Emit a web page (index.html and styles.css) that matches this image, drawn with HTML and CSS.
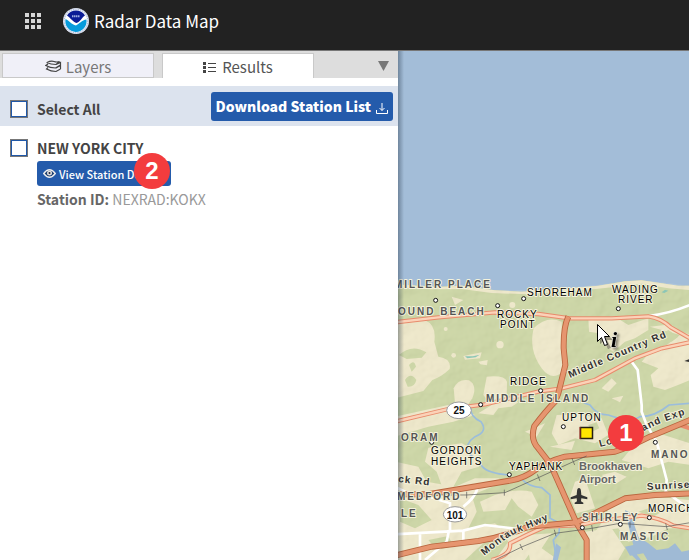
FILE: index.html
```html
<!DOCTYPE html>
<html lang="en">
<head>
<meta charset="utf-8">
<meta name="viewport" content="width=device-width, initial-scale=1">
<title>Radar Data Map</title>
<link rel="stylesheet" href="styles.css">
</head>
<body>
<header class="topbar">
  <button class="apps" type="button" aria-label="Applications">
    <svg width="16" height="16" viewBox="0 0 16 16" fill="#d6d6d6" shape-rendering="crispEdges"><path d="M0 0h4v4H0zM6 0h4v4H6zM12 0h4v4h-4zM0 6h4v4H0zM6 6h4v4H6zM12 6h4v4h-4zM0 12h4v4H0zM6 12h4v4H6zM12 12h4v4h-4z"/></svg>
  </button>
  <svg class="logo" width="26" height="26" viewBox="0 0 26 26" aria-hidden="true">
    <circle cx="13" cy="13" r="13" fill="#e6ebf5"/>
    <circle cx="13" cy="13" r="11.9" fill="none" stroke="#8fa0cf" stroke-width="1" stroke-dasharray="1 1.3"/>
    <circle cx="13" cy="13" r="10.8" fill="#fff"/>
    <path d="M4 7.500A10.600 10.600 0 0 1 22 7.500C19 9 17 14.500 13.500 15C10 14 7.500 10 4 7.500z" fill="#0b1c96"/>
    <path d="M2.600 11C6 12.500 8.500 16.500 13 17.500C16 16 19 12 23.400 11.500A10.600 10.600 0 1 1 2.600 11z" fill="#069bdc"/>
    <path d="M9 8.300h8" stroke="#9dabe0" stroke-width="2" stroke-dasharray="1.500 .500"/>
  </svg>
  <h1>Radar Data Map</h1>
</header>
<main class="workspace">
  <section class="panel">
    <nav class="tabs">
      <button class="tab" type="button">
        <svg width="17" height="13" viewBox="0 0 17 13" fill="none" stroke="#444" stroke-width="1.200"><path d="M2 2.500Q6 .5 9 1.500T14.500 1.500L11 4.500Q6 4.500 1.500 2.500M3 4L.8 5.500Q5 8 10.500 8L15.500 5M3 7.500L1.500 9Q6 11.500 11 11.500L15.500 9M11 4.500L15.500 2.500V5.500L11 8M15.500 5.500V9"/></svg>
        Layers
      </button>
      <button class="tab active" type="button">
        <svg width="13" height="11" viewBox="0 0 13 11" fill="#444" shape-rendering="crispEdges"><path d="M0 0h3v3H0zM0 4h3v3H0zM0 8h3v3H0zM5 1h8v1H5zM5 5h8v1H5zM5 9h8v1H5z"/></svg>
        Results
      </button>
      <button class="collapse" type="button" aria-label="Collapse panel"><svg width="12" height="10" viewBox="0 0 12 10"><path d="M0 0h11L5.500 10z" fill="#777"/></svg></button>
    </nav>
    <div class="select-bar">
      <input id="all" class="check" type="checkbox">
      <label for="all">Select All</label>
      <button class="btn download" type="button">Download Station List
        <svg width="12" height="11" viewBox="0 0 12 11" fill="none" stroke="#fff"><path d="M.5 7v3.500h11V7M6 0v7.500M3.500 5L6 7.500 8.500 5"/></svg>
      </button>
    </div>
    <article class="station">
      <input id="nyc" class="check" type="checkbox">
      <div class="details">
        <label for="nyc">NEW YORK CITY</label>
        <div class="action">
          <button class="btn view" type="button"><svg width="13" height="9" viewBox="0 0 13 9"><path d="M.7 4.500Q6.500-3 12.300 4.500Q6.500 12 .7 4.500z" fill="#1c3f70" stroke="#eee" stroke-width="1.300"/><circle cx="6.500" cy="4" r="2.500" fill="#ddd"/><circle cx="6.500" cy="4" r="1" fill="#223"/></svg>View Station Details</button>
          <span class="badge">2</span>
        </div>
        <p><b>Station ID:</b> NEXRAD:KOKX</p>
      </div>
    </article>
  </section>
  <section class="map" aria-label="Station map">
    <svg class="canvas" viewBox="398 51 291 509" preserveAspectRatio="xMinYMin slice">
      <defs>
        <linearGradient id="edge"><stop offset="0" stop-color="#234" stop-opacity=".4"/><stop offset="1" stop-color="#234" stop-opacity="0"/></linearGradient>
        <path id="montauk" d="M484 556Q510 534 522 531Q534 526 560 515"/>
        <path id="expressway" d="M600 447Q628 440 644 431Q662 421 700 410"/>
        <filter id="relief" x="0" y="0" width="100%" height="100%"><feTurbulence type="fractalNoise" baseFrequency=".018" numOctaves="3" seed="6" result="n"/><feDiffuseLighting in="n" surfaceScale="9" lighting-color="#fff" result="l"><feDistantLight azimuth="225" elevation="60"/></feDiffuseLighting><feComposite in="l" in2="SourceAlpha" operator="in"/></filter>
      </defs>
      <rect x="398" y="51" width="291" height="509" fill="#a3bdd8"/>
      <g transform="translate(395 265) scale(.33333)">
        <path d="M0 58L120 66L200 62L300 76L380 80L450 76L540 68L610 62L690 49L740 46L800 55L850 62H890V890H0z" fill="#c7d29b"/>
        <g fill="#ede6c4">
          <path d="M0 58L120 66L200 62L300 76L380 80L450 76L540 68L610 62L690 49L740 46L800 55L850 62H890V76L820 70L740 56L680 64L580 74L400 88L290 84L200 72L110 73L0 68z"/>
          <path d="M0 172L90 166Q125 180 118 230L130 275Q170 280 164 312Q140 335 112 345L85 378L0 400z"/>
          <path d="M416 190Q455 150 500 170L503 320Q470 350 440 310Q400 255 416 190z"/>
          <path d="M580 160L660 155L700 180L760 160L760 195L720 220L690 230L655 260L620 235L612 205L582 200z"/>
          <path d="M765 185L810 180L885 210V345Q850 360 810 375L775 365L767 330L790 310L740 290L770 255L815 240L855 210z"/>
          <path d="M176 370Q190 340 222 346Q248 362 232 400L208 435L180 415z"/>
          <path d="M275 335Q330 330 336 350L335 400L370 412L350 425L310 430L295 450L250 445L290 420L265 390z"/>
          <path d="M0 455L160 420L240 450L175 470L100 485L0 515z"/>
          <path d="M100 548L200 535L250 560L252 605L200 620L175 665L145 675L125 620L90 590z"/>
          <path d="M0 590L70 605L95 650L180 665L240 640L310 640L330 650L230 690L245 740L220 790L300 775L330 800L270 830L210 885H0z"/>
          <path d="M300 690Q360 670 410 680L430 720L410 755L370 725L350 700L330 735L265 740L255 710z"/>
          <path d="M485 450L550 448L620 460L640 510L600 535L540 520L490 540L470 505z"/>
          <path d="M540 650L570 640L585 685L600 730L545 745L525 695z"/>
          <path d="M735 520L790 505L885 535V600L820 590L760 610L680 585z"/>
          <path d="M640 730L700 700L780 695L885 705V790L820 790L770 815L700 830L670 790L600 800L630 760z"/>
          <path d="M310 790L385 790L430 830L390 885H300L340 830z"/>
          <path d="M390 810L470 805L440 850L490 885H405z"/>
          <path d="M570 800L650 790L690 850L670 885H580z"/>
          <circle cx="352" cy="120" r="9"/><circle cx="315" cy="239" r="11"/><circle cx="152" cy="192" r="6"/><circle cx="176" cy="271" r="7"/>
          <path d="M205 273L260 262L255 280L210 284zM250 290l28-5-2 16-20-3zM620 370l30-30 15 15-25 25zM650 400l35-8-10 20zM170 95l35 10-25 15zM390 500l60-25-25 40zM465 545l75-18-10 28zM620 630l40-10 35 15-30 20z"/>
        </g>
        <g fill="#c7d29b"><path d="M12 270Q50 235 94 262L80 278L35 282zM42 300q15-18 21 5l-13 15zM30 345q17-25 34 0-5 22-26 20zM15 700l55 20 40 45-50 25-45-20zM100 825l60-12 15 30-50 12zM795 210l25-15 30 20-20 15zM580 480l25-8 8 18-25 12zM730 740l45-15 30 12-30 18z"/></g>
        <path d="M0 58L120 66L300 76L450 76L740 46L890 62V890H0z" fill="#fff" filter="url(#relief)" opacity=".15"/>
        <path d="M690 735Q720 745 718 780L730 815L760 835L785 855L820 850L840 835L860 860L885 855V890H760L745 865L705 872L690 845L715 840L700 780zM725 885l-18-18 15-3 16 21zM483 835l15 12-10 40h-15z" fill="#9fbad5"/>
        <g class="stream">
          <path d="M228 430Q225 455 258 470Q280 500 240 515Q210 535 218 565L250 585L262 605Q280 625 340 630"/>
          <path d="M380 642Q400 665 440 668L465 690V760L494 775L492 805L475 825L485 885"/>
          <path d="M535 385Q550 410 585 420Q605 450 640 450Q710 475 735 455Q780 455 822 420L885 415"/>
        </g>
        <path d="M210 274h24l20-5-12 8-25 3zM585 70l10 5-8 3zM800 82l10-8 10 3-12 7z" fill="#8cc6b6"/>
        <g class="street">
          <path d="M710 290L728 315L740 420V440L755 480L785 530L815 645L812 680L880 730M762 153Q825 145 885 120"/>
          <path d="M0 808L205 797L270 780L370 792M75 805V885M205 797V825M162 795L155 830L90 885M165 795V715L80 688M247 672Q238 700 205 725M0 665L50 690L90 694"/>
        </g>
        <g class="roads minor casing"><path d="M0 172L130 157L300 142L430 147L525 160L650 160L760 154Q800 160 827 187L885 220"/><path d="M0 470L160 432L270 418L430 380L500 370L600 345L720 280L800 250L885 232"/><path d="M290 885Q350 870 345 835L395 810L450 785L555 780L600 770L740 752Q800 760 835 782L885 790"/><path d="M850 478L885 490"/></g>
        <g class="roads minor fill"><path d="M0 172L130 157L300 142L430 147L525 160L650 160L760 154Q800 160 827 187L885 220"/><path d="M0 470L160 432L270 418L430 380L500 370L600 345L720 280L800 250L885 232"/><path d="M290 885Q350 870 345 835L395 810L450 785L555 780L600 770L740 752Q800 760 835 782L885 790"/></g>
        <g class="roads major casing"><path d="M0 688L100 688L350 646Q390 638 420 615Q455 590 510 575L660 560Q700 548 765 515L885 465"/><path d="M520 155Q505 185 506 250L511 300L490 385L480 410Q455 435 418 483Q405 525 430 550L465 595L485 640L545 775L575 825V885"/><path d="M0 872L110 845L250 828Q330 815 400 785L545 772L690 700L780 690L885 685"/></g>
        <g class="roads major fill"><path d="M0 688L100 688L350 646Q390 638 420 615Q455 590 510 575L660 560Q700 548 765 515L885 465"/><path d="M520 155Q505 185 506 250L511 300L490 385L480 410Q455 435 418 483Q405 525 430 550L465 595L485 640L545 775L575 825V885"/><path d="M0 872L110 845L250 828Q330 815 400 785L545 772L690 700L780 690L885 685"/></g>
        <path class="rail" d="M90 690H215L330 683L430 638L535 590L575 573M300 885L380 846L480 805L590 790L675 775L815 785L885 773M105 680v20M215 680v20M328 674v18M427 628l8 20M531 580l8 20M375 837l8 18M478 794l5 20M590 780l3 20M705 770v18M812 775l5 20"/>
        <path d="M552 669q5 0 6 10l1 11 18 7v6l-18-3-1 9 7 4v4h-26v-4l7-4-1-9-18 3v-6l18-7 1-11q1-10 6-10zM868 288l20-8v12z" fill="#333"/>
        <g fill="#fff" stroke="#111" stroke-width="3"><circle cx="122" cy="106" r="6"/><circle cx="308" cy="122" r="6"/><circle cx="386" cy="101" r="6"/><circle cx="670" cy="131" r="6"/><circle cx="437" cy="377" r="6"/><circle cx="257" cy="419" r="6"/><circle cx="505" cy="485" r="6"/><circle cx="110" cy="532" r="6"/><circle cx="343" cy="629" r="6"/><circle cx="781" cy="532" r="6"/><circle cx="763" cy="758" r="6"/><circle cx="562" cy="788" r="6"/><circle cx="676" cy="778" r="6"/></g>
        <g fill="#fff" stroke="#999" stroke-width="3"><ellipse cx="192" cy="436" rx="37" ry="25"/><ellipse cx="180" cy="748" rx="35" ry="23"/></g>
      </g>
      <g class="place town">
        <text x="527" y="296">SHOREHAM</text><text x="612" y="293">WADING</text><text x="618" y="303">RIVER</text>
        <text x="497" y="318">ROCKY</text><text x="500" y="328">POINT</text><text x="510" y="385">RIDGE</text><text x="562" y="421">UPTON</text>
        <text x="431" y="454">GORDON</text><text x="431" y="465">HEIGHTS</text><text x="509" y="470">YAPHANK</text><text x="648" y="512">MORICH</text>
      </g>
      <g class="place area">
        <text x="394" y="288">MILLER PLACE</text><text x="398" y="315">OUND BEACH</text><text x="486" y="402">MIDDLE ISLAND</text>
        <text x="401" y="441">ORAM</text><text x="397" y="500">MEDFORD</text><text x="401" y="517">LE</text><text x="651" y="458">MANO</text><text x="582" y="521">SHIRLEY</text><text x="620" y="540">MASTIC</text>
      </g>
      <g class="place airport"><text x="579" y="470">Brookhaven</text><text x="579" y="483">Airport</text></g>
      <g class="place road">
        <text transform="translate(570 378) rotate(-23)">Middle Country Rd</text><text><textPath href="#expressway">Long Island Exp</textPath></text>
        <text transform="translate(398 482) rotate(6)">ck Rd</text><text transform="translate(647 490) rotate(-3)">Sunrise</text><text><textPath href="#montauk">Montauk Hwy</textPath></text>
      </g>
      <g class="shield"><text x="459" y="414">25</text><text x="455" y="519">101</text></g>
      <path d="M580.500 427.500h12v11h-12z" fill="#ffe500" stroke="#251f10" stroke-width="1.500"/><path d="M580 427v12" stroke="#a52a22"/>
      <g opacity=".35" transform="translate(3 3)"><path d="M597 324v17l4-3 4 8 3-1-4-8h6z"/></g>
      <path d="M597.500 324.500v17l4-4 3 8 3-1-3-8h5z" fill="#fff" stroke="#000"/>
      <text class="info" x="611" y="347">i</text>
      <g class="marker"><circle cx="626" cy="433" r="18"/><text x="626" y="441">1</text></g>
      <rect x="398" y="51" width="6" height="509" fill="url(#edge)"/>
    </svg>
  </section>
</main>
</body>
</html>
```
FILE: styles.css
```css
* { box-sizing: border-box; }
body {
  margin: 0;
  min-height: 100vh;
  display: flex;
  flex-direction: column;
  font-family: "Noto Sans CJK SC", "Noto Sans", sans-serif;
  font-size: 14px;
  line-height: 20px;
  color: #444;
  background: #fff;
}
button { font: inherit; border: 0; padding: 0; cursor: pointer; }
svg { display: block; flex: none; }

.topbar {
  display: flex;
  align-items: center;
  height: 51px;
  padding: 0 25px 8px;
  background: #222;
  border-bottom: 1px solid #777;
}
.apps { background: none; margin-right: 22px; }
.logo { margin-right: 5px; }
h1 { margin: 0; font-size: 17px; font-weight: 400; line-height: 24px; color: #fff; }

.workspace { flex: 1; display: grid; grid-template-columns: 26fr 19fr; }
.panel { min-width: 0; }
.tabs { display: flex; align-items: stretch; gap: 8px; height: 27px; padding: 2px 8px 0 2px; background: #ddd; }
.tab {
  display: flex;
  align-items: center;
  justify-content: center;
  gap: 4px;
  width: 152px;
  padding-top: 2px;
  font-size: 15px;
  color: #777;
  background: #f0f0f8;
  border: 1px solid #c9c9c9;
}
.tab.active { gap: 6px; color: #555; background: #fff; border-bottom: 0; }
.collapse { margin-left: auto; background: none; }

.select-bar {
  display: flex;
  align-items: center;
  gap: 9px;
  height: 40px;
  margin-top: 8px;
  padding: 0 5px 0 10px;
  background: #dce3ee;
}
label { font-weight: 700; line-height: 18px; }
.select-bar label { padding-top: 6px; }
.check {
  appearance: none;
  flex: none;
  width: 18px;
  height: 18px;
  margin: 0;
  background: #fff;
  border: 2px solid #2058a8;
  outline: 1px solid #777;
  outline-offset: -1px;
}
.select-bar .check { margin-top: 6px; }
.btn { display: flex; align-items: center; color: #fff; background: #245bab; border-radius: 3px; }
.download { gap: 5px; height: 29px; margin-left: auto; padding: 0 5px; font-weight: 900; }
.download svg { margin-top: 4px; }

.station { display: flex; align-items: flex-start; gap: 9px; padding: 13px 10px; }
.details { display: flex; flex-direction: column; }
.action { position: relative; margin-top: 4px; }
.view { gap: 3px; height: 25px; padding: 0 8px 0 6px; font-size: 11px; font-weight: 500; }
.badge {
  position: absolute;
  left: 97px;
  top: -8px;
  width: 36px;
  height: 36px;
  border-radius: 50%;
  background: #f33c3e;
  color: #fff;
  font: 700 24px/36px "Liberation Sans", sans-serif;
  text-align: center;
}
p { margin: 3px 0 0; color: #999; }
p b { color: #666; }

.map { position: relative; min-width: 0; overflow: hidden; background: #a3bdd8; }
.canvas { position: absolute; inset: 0; width: 100%; height: 100%; font-family: "Liberation Sans", sans-serif; }
.stream { fill: none; stroke: #9bbddb; stroke-width: 5; }
.street { fill: none; stroke: #fff; stroke-width: 8; }
.roads { fill: none; stroke-linejoin: round; }
.minor.casing { stroke: #e88b6c; stroke-width: 13; }
.minor.fill { stroke: #fbd2b8; stroke-width: 7; }
.major.casing { stroke: #b9653e; stroke-width: 18; }
.major.fill { stroke: #e6956f; stroke-width: 13; }
.rail { fill: none; stroke: #555; stroke-width: 2; }
.place { paint-order: stroke; stroke: #f4f2dc; stroke-width: 2px; stroke-linejoin: round; }
.town { font-size: 10px; letter-spacing: 1px; fill: #000; }
.area { font-size: 10px; font-weight: 700; letter-spacing: 2px; fill: #555; }
.airport { font-size: 11px; font-weight: 700; fill: #666; }
.road { font-size: 10px; font-weight: 700; letter-spacing: 1px; fill: #333; }
.shield { font-size: 10px; font-weight: 700; text-anchor: middle; fill: #111; }
.info { font: italic 700 22px "Liberation Serif", serif; paint-order: stroke; stroke: #ddd; stroke-width: 1px; filter: drop-shadow(2px 2px 1px #0006); }
.marker circle { fill: #f33c3e; }
.marker text { fill: #fff; font-size: 24px; font-weight: 700; text-anchor: middle; }
```
